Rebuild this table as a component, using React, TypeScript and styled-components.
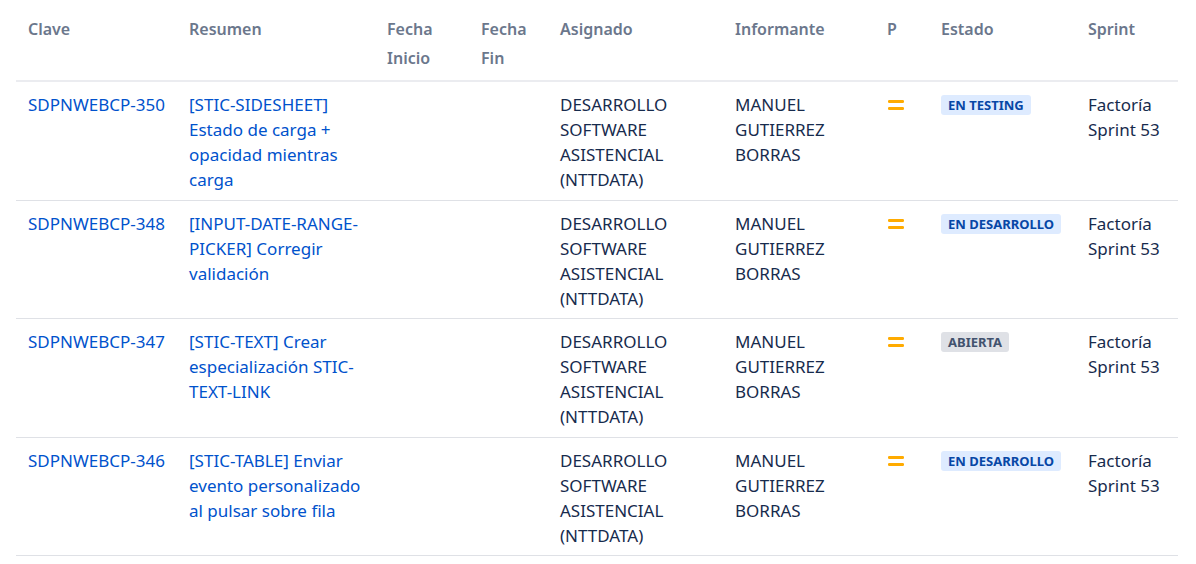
import React from "react";
import styled, { createGlobalStyle } from "styled-components";

type Status = "testing" | "desarrollo" | "abierta";

interface Issue {
  key: string;
  summary: string;
  assignee: string;
  reporter: string;
  status: Status;
  sprint: string;
}

const issues: Issue[] = [
  {
    key: "SDPNWEBCP-350",
    summary: "[STIC-SIDESHEET] Estado de carga + opacidad mientras carga",
    assignee: "DESARROLLO SOFTWARE ASISTENCIAL (NTTDATA)",
    reporter: "MANUEL GUTIERREZ BORRAS",
    status: "testing",
    sprint: "Factoría Sprint 53",
  },
  {
    key: "SDPNWEBCP-348",
    summary: "[INPUT-DATE-RANGE-PICKER] Corregir validación",
    assignee: "DESARROLLO SOFTWARE ASISTENCIAL (NTTDATA)",
    reporter: "MANUEL GUTIERREZ BORRAS",
    status: "desarrollo",
    sprint: "Factoría Sprint 53",
  },
  {
    key: "SDPNWEBCP-347",
    summary: "[STIC-TEXT] Crear especialización STIC-TEXT-LINK",
    assignee: "DESARROLLO SOFTWARE ASISTENCIAL (NTTDATA)",
    reporter: "MANUEL GUTIERREZ BORRAS",
    status: "abierta",
    sprint: "Factoría Sprint 53",
  },
  {
    key: "SDPNWEBCP-346",
    summary: "[STIC-TABLE] Enviar evento personalizado al pulsar sobre fila",
    assignee: "DESARROLLO SOFTWARE ASISTENCIAL (NTTDATA)",
    reporter: "MANUEL GUTIERREZ BORRAS",
    status: "desarrollo",
    sprint: "Factoría Sprint 53",
  },
];

const statusLabel: Record<Status, string> = {
  testing: "EN TESTING",
  desarrollo: "EN DESARROLLO",
  abierta: "ABIERTA",
};

const headers = [
  "Clave",
  "Resumen",
  "Fecha Inicio",
  "Fecha Fin",
  "Asignado",
  "Informante",
  "P",
  "Estado",
  "Sprint",
];

// medium priority "=" icon
const PriorityMedium = () => (
  <svg width="18" height="14" viewBox="0 0 18 14">
    <rect x="1" y="3" width="16" height="3" rx="1.2" fill="#ffab00" />
    <rect x="1" y="10" width="16" height="3" rx="1.2" fill="#ffab00" />
  </svg>
);

const App: React.FC = () => {
  return (
    <>
      <GlobalStyle />
      <Page>
        <Table>
          <HeaderRow>
            {headers.map((h) => (
              <HeaderCell key={h}>{h}</HeaderCell>
            ))}
          </HeaderRow>
          {issues.map((issue) => (
            <Row key={issue.key}>
              <Cell>
                <Link>{issue.key}</Link>
              </Cell>
              <Cell>
                <Link>{issue.summary}</Link>
              </Cell>
              <Cell />
              <Cell />
              <Cell>{issue.assignee}</Cell>
              <Cell>{issue.reporter}</Cell>
              <Cell>
                <IconWrap>
                  <PriorityMedium />
                </IconWrap>
              </Cell>
              <Cell>
                <Lozenge status={issue.status}>{statusLabel[issue.status]}</Lozenge>
              </Cell>
              <Cell>{issue.sprint}</Cell>
            </Row>
          ))}
        </Table>
      </Page>
    </>
  );
};

const GlobalStyle = createGlobalStyle`
  body {
    margin: 0;
    background: #fff;
    font-family: "Noto Sans", "Open Sans", sans-serif;
  }
`;

const Page = styled.div`
  padding: 0 18px 0 16px;
`;

const Table = styled.div`
  display: grid;
  grid-template-columns: 161px 198px 94px 79px 175px 152px 54px 147px 102px;
`;

const HeaderRow = styled.div`
  display: contents;
`;

const HeaderCell = styled.div`
  padding: 15px 8px 7px 12px;
  font-size: 16px;
  line-height: 29px;
  font-weight: 600;
  color: #6b778c;
  border-bottom: 2px solid #ebecf0;
`;

const Row = styled.div`
  display: contents;
`;

const Cell = styled.div`
  padding: 10px 8px 7.5px 12px;
  font-size: 17px;
  line-height: 25px;
  color: #172b4d;
  border-bottom: 1px solid #dfe1e6;
`;

const Link = styled.a`
  color: #0052cc;
  text-decoration: none;
  cursor: pointer;
`;

const IconWrap = styled.span`
  display: inline-flex;
  padding-top: 4px;
`;

const Lozenge = styled.span<{ status: Status }>`
  display: inline-block;
  margin-top: 3px;
  padding: 0 7px;
  border-radius: 3px;
  font-size: 13px;
  line-height: 20px;
  font-weight: 700;
  vertical-align: top;
  background: ${({ status }) => (status === "abierta" ? "#dfe1e6" : "#deebff")};
  color: ${({ status }) => (status === "abierta" ? "#42526e" : "#0747a6")};
`;

export default App;
